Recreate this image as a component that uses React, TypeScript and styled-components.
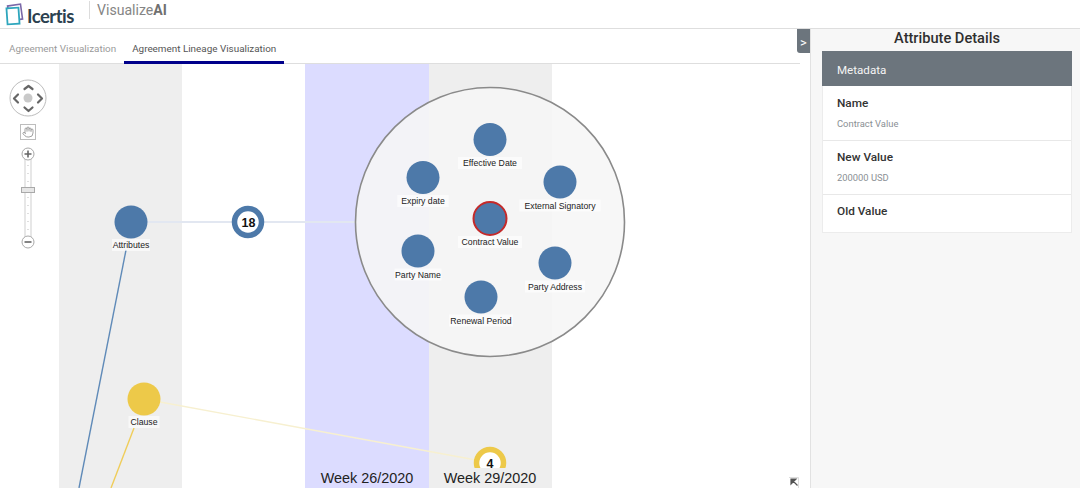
import React from 'react';
import styled, { createGlobalStyle } from 'styled-components';
import { Hand } from 'lucide-react';

const uiFont = `Roboto, "Open Sans", sans-serif`;
const blue = '#4d79a9';
const yellow = '#edc949';

const GlobalStyle = createGlobalStyle`
  html, body {
    margin: 0;
    padding: 0;
    background: #fff;
    overflow: hidden;
    font-family: ${uiFont};
  }
`;

const Page = styled.div`
  width: 1080px;
  height: 488px;
  display: flex;
  flex-direction: column;
  overflow: hidden;
`;

const Header = styled.header`
  height: 28px;
  flex: none;
  display: flex;
  align-items: flex-start;
  padding-left: 5px;
  border-bottom: 1px solid #dedede;
`;

const LogoWrap = styled.div`
  display: flex;
  align-items: center;
  width: 84px;
  height: 28px;
`;

const LogoWord = styled.span`
  font-family: "Lato", "Open Sans", sans-serif;
  font-size: 18.5px;
  font-weight: 700;
  color: #2b4150;
  margin-left: 2px;
  margin-top: 3px;
  letter-spacing: -0.5px;
`;

const HeaderDivider = styled.div`
  width: 1px;
  height: 18px;
  margin-top: 1px;
  background: #dcdcdc;
`;

const ProductName = styled.div`
  margin-left: 7px;
  font-size: 14.1px;
  line-height: 20px;
  color: #858585;
  b { font-weight: 700; color: #707070; }
`;

const Main = styled.div`
  flex: 1;
  display: flex;
  min-height: 0;
`;

const LeftColumn = styled.section`
  position: relative;
  width: 811px;
  flex: none;
  border-right: 1px solid #e2e2e2;
  box-sizing: border-box;
  display: flex;
  flex-direction: column;
`;

const TabBar = styled.nav`
  height: 35px;
  flex: none;
  width: 800px;
  box-sizing: border-box;
  display: flex;
  border-bottom: 1px solid #dedede;
`;

const Tab = styled.div<{ $active?: boolean }>`
  height: 35px;
  box-sizing: border-box;
  padding: 12px 8px 0 ${(p) => (p.$active ? 8 : 9)}px;
  font-size: 9.9px;
  line-height: 16px;
  white-space: nowrap;
  color: ${(p) => (p.$active ? '#555' : '#9a9a9a')};
  border-bottom: ${(p) => (p.$active ? '3px solid #00008b' : 'none')};
`;

const Toggle = styled.div`
  position: absolute;
  top: 0;
  right: 0;
  width: 13px;
  height: 24px;
  background: #6c757d;
  color: #fff;
  font-size: 13px;
  line-height: 27px;
  text-align: center;
  border-bottom-left-radius: 3px;
`;

const Canvas = styled.div`
  position: relative;
  flex: 1;
  min-height: 0;
`;

const GraphSvg = styled.svg`
  display: block;
  font-family: "Liberation Sans", Arial, sans-serif;
`;

const NavControls = styled.svg`
  position: absolute;
  left: 8px;
  top: 15px;
`;

const ExpandIcon = styled.svg`
  position: absolute;
  left: 788px;
  bottom: 0;
`;

const SidePanel = styled.aside`
  flex: 1;
  background: #f7f7f7;
  display: flex;
  flex-direction: column;
  padding: 0 8px 0 11px;
`;

const PanelTitle = styled.h2`
  margin: 0;
  height: 22px;
  font-size: 14.6px;
  line-height: 18px;
  font-weight: 500;
  color: #2f2f2f;
  text-align: center;
`;

const Card = styled.div`
  background: #fff;
  border: 1px solid #ececec;
  border-top: none;
`;

const CardHead = styled.div`
  height: 35px;
  margin: 0 -1px;
  padding-left: 15px;
  background: #6c757d;
  color: #f4f4f4;
  font-size: 11.6px;
  line-height: 38px;
`;

const Row = styled.div`
  height: 54px;
  box-sizing: border-box;
  padding: 9px 14px 0;
  & + & {
    border-top: 1px solid #e8e8e8;
    padding-top: 8px;
  }
  &:last-child { height: 38px; }
`;

const RowLabel = styled.div`
  font-size: 11.8px;
  line-height: 16px;
  font-weight: 500;
  color: #333;
`;

const RowValue = styled.div`
  margin-top: 7px;
  font-size: 9.4px;
  line-height: 12px;
  color: #8a8f94;
`;

// canvas coords start under the tab bar (y - 64)
const OFFSET = 64;
const nodes = [
  { label: 'Effective Date', x: 490, y: 139.5 },
  { label: 'Expiry date', x: 423, y: 177.5 },
  { label: 'External Signatory', x: 560, y: 182 },
  { label: 'Contract Value', x: 490, y: 218.5, selected: true },
  { label: 'Party Name', x: 418, y: 251 },
  { label: 'Party Address', x: 555, y: 263 },
  { label: 'Renewal Period', x: 481, y: 297 },
];

const NodeLabel = ({ x, y, text, w }: { x: number; y: number; text: string; w: number }) => (
  <g>
    <rect x={x - w / 2} y={y - 6} width={w} height={12} fill="#fff" fillOpacity={0.6} />
    <text x={x} y={y + 3} fontSize={8.7} textAnchor="middle" fill="#222">{text}</text>
  </g>
);

const Graph = () => (
  <GraphSvg width={810} height={424} viewBox={`0 ${OFFSET} 810 424`}>
    <rect x={59} y={64} width={123} height={424} fill="#eeeeee" />
    <rect x={305} y={64} width={124} height={424} fill="#dcdcff" />
    <rect x={429} y={64} width={123} height={424} fill="#eeeeee" />

    <line x1={147} y1={222} x2={358} y2={222} stroke="#e2e7f1" strokeWidth={2} />
    <line x1={126} y1={250} x2={79} y2={488} stroke="#5f8ab8" strokeWidth={1.4} />
    <line x1={134} y1={428} x2={111} y2={488} stroke="#f0cd5a" strokeWidth={1.4} />
    <line x1={160} y1={402} x2={476} y2={460} stroke="#f7f0d0" strokeWidth={1.3} />

    <circle cx={131} cy={222} r={16.5} fill={blue} />
    <NodeLabel x={131} y={245} text="Attributes" w={38} />

    <circle cx={248} cy={222} r={13.5} fill="#fff" stroke={blue} strokeWidth={5.5} />
    <text x={248.500} y={226.500} fontSize={12.5} fontWeight={700} textAnchor="middle" fill="#111">18</text>

    <circle cx={144} cy={399} r={16.5} fill={yellow} />
    <NodeLabel x={144} y={422} text="Clause" w={31} />

    <circle cx={490} cy={463} r={13.5} fill="#fff" stroke={yellow} strokeWidth={5.5} />
    <text x={490} y={467.500} fontSize={12.5} fontWeight={700} textAnchor="middle" fill="#111">4</text>
    <rect x={429} y={468} width={123} height={20} fill="#eeeeee" />

    <text x={367} y={483} fontSize={14.4} textAnchor="middle" fill="#222">Week 26/2020</text>
    <text x={490} y={483} fontSize={14.4} textAnchor="middle" fill="#222">Week 29/2020</text>

    <circle cx={490} cy={222} r={134.5} fill="#f6f6f6" fillOpacity={0.88} stroke="#8a8a8a" strokeWidth={1.6} />
    {nodes.map((n) => (
      <g key={n.label}>
        <circle
          cx={n.x}
          cy={n.y}
          r={16.5}
          fill={blue}
          stroke={n.selected ? '#c42a2a' : 'none'}
          strokeWidth={n.selected ? 2 : 0}
        />
        <NodeLabel x={n.x} y={n.y + 23.5} text={n.label} w={n.label.length * 4.3 + 4} />
      </g>
    ))}
  </GraphSvg>
);

const Navigator = () => (
  <NavControls width={40} height={175} viewBox="0 0 40 175" fill="none">
    <circle cx={20} cy={19} r={18} fill="#fff" stroke="#bdbdbd" />
    <circle cx={20} cy={19} r={4.500} fill="#c9c9c9" />
    <g stroke="#666" strokeWidth={2.2} strokeLinecap="round" strokeLinejoin="round">
      <path d="M16.500 10 L20.500 7 L24.500 10" />
      <path d="M16.500 28.500 L20.500 32 L24.500 28.500" />
      <path d="M10 15.500 L6 19.500 L10 23.500" />
      <path d="M30 15.500 L34 19.500 L30 23.500" />
    </g>
    <rect x={12.500} y={45.500} width={15} height={15} fill="#fff" stroke="#bdbdbd" />
    <Hand x={14} y={47} width={12} height={12} color="#8a8a8a" strokeWidth={1.6} />
    <rect x={17} y={75} width={6} height={88} fill="#fff" stroke="#cfcfcf" />
    <line x1={20} y1={78} x2={20} y2={160} stroke="#bdbdbd" strokeDasharray="1 7" />
    <rect x={13.500} y={108.500} width={13} height={5} fill="#e6e6e6" stroke="#a9a9a9" />
    <circle cx={20} cy={75} r={6} fill="#fff" stroke="#a9a9a9" />
    <path d="M16.500 75 H23.500 M20 71.500 V78.500" stroke="#666" strokeWidth={1.6} />
    <circle cx={20} cy={163} r={6} fill="#fff" stroke="#a9a9a9" />
    <path d="M16.500 163 H23.500" stroke="#666" strokeWidth={1.6} />
  </NavControls>
);

const Logo = () => (
  <LogoWrap>
    <svg width={20} height={24} viewBox="0 0 20 24" fill="none">
      <rect x={3.500} y={3} width={13} height={15} stroke="#7a68a8" strokeWidth={1.6} transform="rotate(-8 10 10)" />
      <rect x={2} y={6} width={12} height={16} fill="#fff" stroke="#2ea6bd" strokeWidth={1.8} transform="rotate(-4 8 14)" />
    </svg>
    <LogoWord>Icertis</LogoWord>
  </LogoWrap>
);

export default function App() {
  return (
    <Page>
      <GlobalStyle />
      <Header>
        <Logo />
        <HeaderDivider />
        <ProductName>Visualize<b>AI</b></ProductName>
      </Header>
      <Main>
        <LeftColumn>
          <TabBar>
            <Tab>Agreement Visualization</Tab>
            <Tab $active>Agreement Lineage Visualization</Tab>
          </TabBar>
          <Toggle>&gt;</Toggle>
          <Canvas>
            <Graph />
            <Navigator />
            <ExpandIcon width={12} height={12} viewBox="0 0 12 12" fill="none">
              <path d="M1 1.500 H10.500 V12" stroke="#ddd" />
              <path d="M3 3 H8 L3 8 Z M5 5 L9.500 9.500" stroke="#555" strokeWidth={1.2} fill="#555" />
            </ExpandIcon>
          </Canvas>
        </LeftColumn>
        <SidePanel>
          <PanelTitle>Attribute Details</PanelTitle>
          <Card>
            <CardHead>Metadata</CardHead>
            <Row>
              <RowLabel>Name</RowLabel>
              <RowValue>Contract Value</RowValue>
            </Row>
            <Row>
              <RowLabel>New Value</RowLabel>
              <RowValue>200000 USD</RowValue>
            </Row>
            <Row>
              <RowLabel>Old Value</RowLabel>
            </Row>
          </Card>
        </SidePanel>
      </Main>
    </Page>
  );
}
